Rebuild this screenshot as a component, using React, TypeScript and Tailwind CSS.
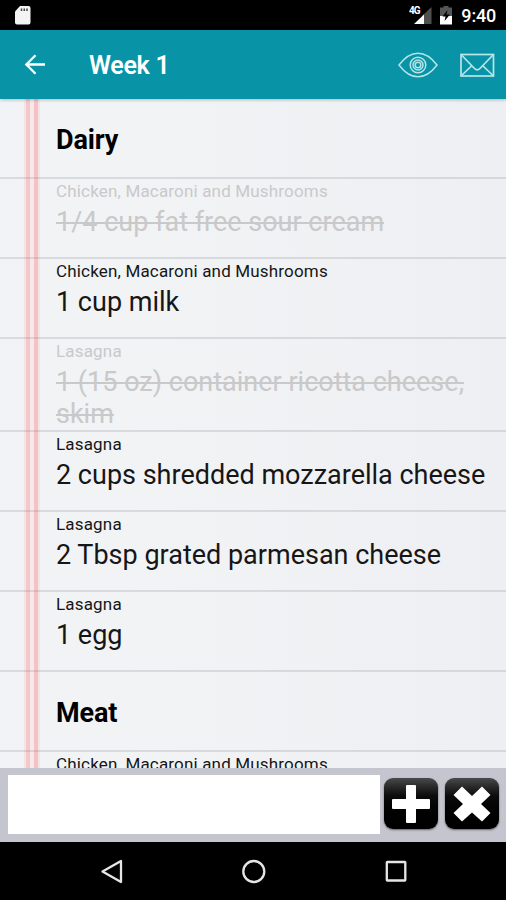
type Item = {
  recipe: string;
  text?: string;
  done?: boolean;
  height: string;
};

type Section = {
  title: string;
  items: Item[];
};

const sections: Section[] = [
  {
    title: "Dairy",
    items: [
      { recipe: "Chicken, Macaroni and Mushrooms", text: "1/4 cup fat free sour cream", done: true, height: "h-20" },
      { recipe: "Chicken, Macaroni and Mushrooms", text: "1 cup milk", height: "h-20" },
      { recipe: "Lasagna", text: "1 (15 oz) container ricotta cheese, skim", done: true, height: "h-[93px]" },
      { recipe: "Lasagna", text: "2 cups shredded mozzarella cheese", height: "h-20" },
      { recipe: "Lasagna", text: "2 Tbsp grated parmesan cheese", height: "h-20" },
      { recipe: "Lasagna", text: "1 egg", height: "h-20" },
    ],
  },
  {
    title: "Meat",
    items: [{ recipe: "Chicken, Macaroni and Mushrooms", height: "h-20" }],
  },
];

function StatusBar() {
  return (
    <div className="flex h-[30px] shrink-0 items-center bg-black pl-[14px] pr-[10px] text-white">
      <svg width="18" height="20" viewBox="0 0 18 20">
        <path d="M6 1h8.500a2 2 0 0 1 2 2V17.500a2 2 0 0 1-2 2H3a2 2 0 0 1-2-2V6.500z" fill="#f4f4f4" />
        <path d="M7.500 3.500v2.500M10.300 3.500v2.500M13 3.500v2.500" stroke="#444" strokeWidth="1.500" />
      </svg>
      <div className="flex-1" />
      <svg width="24" height="22" viewBox="0 0 24 22" className="mr-[6px]">
        <path d="M22.500 3v17h-9.500V12z" fill="#505050" />
        <path d="M15 10.500v9.500H5z" fill="#fff" />
        <text x="0" y="10" fill="#fff" fontSize="10" fontWeight="700" letterSpacing="-1" fontFamily="Roboto">
          4G
        </text>
      </svg>
      <svg width="14" height="20" viewBox="0 0 14 20" className="mr-[8px]">
        <path d="M4.500 1h5v1.500h3.500V11H1V2.500h3.500z" fill="#555" />
        <path d="M1 11h12v8.500H1z" fill="#fff" />
        <path d="M8.500 5L3.500 11.500h3L5.500 16l5.500-6.500H7.500z" fill="#000" />
      </svg>
      <span className="pt-[2px] text-[18px] font-medium leading-[30px] tracking-[-0.200px]">9:40</span>
    </div>
  );
}

function AppBar() {
  return (
    <div className="relative z-10 flex h-[69px] shrink-0 items-center bg-[#0894a6] shadow-[0_1px_3px_rgba(0,0,0,0.25)]">
      <svg width="22" height="22" viewBox="0 0 22 22" className="ml-[24px]" fill="none" stroke="#fff" strokeWidth="2.300">
        <path d="M21 10.500H3M11.500 1.300L2.300 10.500l9.200 9.200" />
      </svg>
      <h1 className="ml-[43px] mt-[3px] flex-1 text-[25px] font-semibold tracking-[-0.300px] text-white">Week 1</h1>
      <svg width="42" height="28" viewBox="0 0 42 28" className="mr-[20px]" fill="none" stroke="#b3e4e8" strokeWidth="1.500">
        <path d="M2 14C8 6 14 2.200 21 2.200S34 6 40 14C34 22 28 25.800 21 25.800S8 22 2 14z" />
        <circle cx="21" cy="14" r="7.800" />
        <circle cx="21" cy="14" r="5" />
        <circle cx="21" cy="14" r="2.800" />
      </svg>
      <svg width="36" height="26" viewBox="0 0 36 26" className="mr-[11px]" fill="none" stroke="#b9e6e9" strokeWidth="1.700">
        <rect x="2" y="2.500" width="32.500" height="21.500" />
        <path d="M2.500 3l13 13.500q2.700 2.700 5.400 0L34 3M2.500 23.500l10.500-10M34 23.500l-10.500-10" />
      </svg>
    </div>
  );
}

function ItemRow({ item }: { item: Item }) {
  return (
    <div className={`${item.height} ${item.done ? "text-[#c9c9ca]" : "text-[#161617]"} shrink-0 border-b-2 border-[#77778833] pl-[56px] pr-4`}>
      <div className="pt-[2px] text-[17px] leading-[20px] tracking-[0.170px]">{item.recipe}</div>
      {item.text && (
        <div className={`pt-[5px] text-[27px] leading-[32px] ${item.done ? "line-through decoration-[1.500px]" : ""}`}>{item.text}</div>
      )}
    </div>
  );
}

function List() {
  return (
    <div className="relative flex min-h-0 flex-1 flex-col overflow-hidden bg-linear-to-r from-[#f1f4f6] via-[#f1f2f4] to-[#eeeff3]">
      {/* notebook margin */}
      <div className="absolute inset-y-0 left-[24px] w-[16px] bg-linear-to-r from-[#f4e4e7] via-[#f6e9ea] to-[#f4e4e7]">
        <div className="flex h-full justify-between px-[2px]">
          <div className="w-[4px] bg-[#f4c8ca]" />
          <div className="w-[4px] bg-[#f6c1c6]" />
        </div>
      </div>
      <div className="relative flex flex-col">
        {sections.map((section) => (
          <div key={section.title} className="flex flex-col">
            <h2 className="h-20 border-b-2 border-[#77778833] pl-[56px] text-[27px] font-bold leading-[82px] tracking-[-0.150px] text-black">
              {section.title}
            </h2>
            {section.items.map((item, i) => (
              <ItemRow key={i} item={item} />
            ))}
          </div>
        ))}
      </div>
    </div>
  );
}

function AddBar() {
  const button =
    "h-[51px] w-[54px] rounded-[9px] bg-linear-to-b from-[#4a4a4c] via-[#0c0c0c] via-35% to-black shadow-[0_1px_2px_rgba(0,0,0,0.5)] flex items-center justify-center";
  return (
    <div className="flex h-[74px] shrink-0 items-start bg-[#c5c5cf] pl-2 pt-[7px]">
      <input className="h-[59px] w-[372px] bg-white outline-none" />
      <button className={`${button} ml-[4px] mt-[3px]`}>
        <svg width="40" height="40" viewBox="0 0 40 40" fill="#fff">
          <path d="M16 1h8q1 0 1 1v13h13q1 0 1 1v8q0 1-1 1H25v13q0 1-1 1h-8q-1 0-1-1V25H2q-1 0-1-1v-8q0-1 1-1h13V2q0-1 1-1z" />
        </svg>
      </button>
      <button className={`${button} ml-[7px] mt-[3px]`}>
        <svg width="40" height="38" viewBox="0 0 40 38" fill="#fff">
          <path d="M10 1.500l10 9.500 10-9.500 8.500 8.500L29 19l9.500 9-8.500 8.500L20 27.500 10 36.500 1.500 28 11 19 1.500 10z" />
        </svg>
      </button>
    </div>
  );
}

function NavBar() {
  return (
    <div className="flex h-[58px] shrink-0 items-center bg-black">
      <svg width="506" height="58" viewBox="0 0 506 58" fill="none" stroke="#e6e6e6" strokeWidth="2.300">
        <path d="M121 19v21L102.500 29.500z" strokeLinejoin="round" />
        <circle cx="253.800" cy="29.500" r="10.500" />
        <rect x="386.800" y="20" width="18.500" height="18.500" rx="0.500" />
      </svg>
    </div>
  );
}

export default function App() {
  return (
    <div className="flex h-[900px] w-[506px] flex-col overflow-hidden bg-black font-['Roboto',sans-serif]">
      <StatusBar />
      <AppBar />
      <List />
      <AddBar />
      <NavBar />
    </div>
  );
}
